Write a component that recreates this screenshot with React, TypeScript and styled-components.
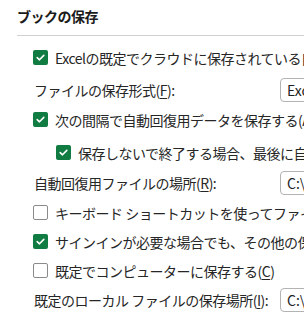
import React from "react";
import styled, { createGlobalStyle } from "styled-components";

const GlobalStyle = createGlobalStyle`
  html, body {
    margin: 0;
    padding: 0;
    background: #ffffff;
  }
  body {
    font-family: "Noto Sans CJK JP", sans-serif;
    color: #262626;
  }
`;

const Page = styled.div`
  width: 304px;
  height: 316px;
  overflow: hidden;
  background: #ffffff;
`;

const Title = styled.h2`
  margin: 0;
  padding: 5px 0 0 17px;
  height: 35px;
  box-sizing: border-box;
  font-size: 14px;
  line-height: 22px;
  font-weight: 700;
  letter-spacing: -0.5px;
  color: #1b1b1b;
  font-family: "Noto Sans CJK JP", sans-serif;
  white-space: nowrap;
`;

const Divider = styled.div`
  height: 1px;
  margin-left: 17px;
  background: #d1d1d1;
`;

const Options = styled.div`
  display: flex;
  flex-direction: column;
  padding: 7px 0 0 33px;
`;

const CheckRow = styled.label<{ $indent?: boolean; $top?: number }>`
  display: flex;
  align-items: center;
  gap: 7px;
  height: 29px;
  margin-top: ${(p) => p.$top ?? 0}px;
  padding-left: ${(p) => (p.$indent ? 23 : 0)}px;
  font-size: 14px;
  line-height: 18px;
  letter-spacing: -0.5px;
  white-space: nowrap;
  font-family: "Noto Sans CJK JP", sans-serif;
`;

const Box = styled.span<{ $checked?: boolean }>`
  flex: none;
  width: 15px;
  height: 15px;
  box-sizing: border-box;
  border-radius: 2px;
  display: flex;
  align-items: center;
  justify-content: center;
  background: ${(p) => (p.$checked ? "#107c41" : "#ffffff")};
  border: ${(p) => (p.$checked ? "none" : "1px solid #8a8a8a")};
`;

const FormRow = styled.div<{ $top?: number }>`
  display: grid;
  grid-template-columns: 246px 80px;
  align-items: center;
  height: 30px;
  margin-top: ${(p) => p.$top ?? 0}px;
  padding-left: 1px;
  font-size: 14px;
  line-height: 18px;
  letter-spacing: -0.5px;
  white-space: nowrap;
  font-family: "Noto Sans CJK JP", sans-serif;
`;

const Field = styled.div`
  height: 24px;
  box-sizing: border-box;
  border: 1px solid #b3b3b3;
  border-radius: 4px;
  padding-left: 6px;
  display: flex;
  align-items: center;
  font-family: "Noto Sans CJK JP", sans-serif;
  font-size: 14px;
  letter-spacing: 0;
  color: #1f1f1f;
  overflow: hidden;
`;

const Key = styled.span`
  text-decoration: underline;
  text-underline-offset: 2px;
`;

function Check({ checked }: { checked?: boolean }) {
  return (
    <Box $checked={checked}>
      {checked ? (
        <svg width="11" height="11" viewBox="0 0 11 11">
          <path
            d="M2.2 5.6 L4.5 7.8 L8.8 3.4"
            fill="none"
            stroke="#ffffff"
            strokeWidth="1.6"
            strokeLinecap="round"
            strokeLinejoin="round"
          />
        </svg>
      ) : null}
    </Box>
  );
}

export default function App() {
  return (
    <Page>
      <GlobalStyle />
      <Title>ブックの保存</Title>
      <Divider />
      <Options>
        <CheckRow>
          <Check checked />
          Excelの既定でクラウドに保存されている自動保存を有効にする
        </CheckRow>
        <FormRow $top={3}>
          <span>
            ファイルの保存形式(<Key>F</Key>):
          </span>
          <Field>Excel ブック (*.xlsx)</Field>
        </FormRow>
        <CheckRow>
          <Check checked />
          次の間隔で自動回復用データを保存する(A):
        </CheckRow>
        <CheckRow $indent $top={4}>
          <Check checked />
          保存しないで終了する場合、最後に自動回復されたバージョンを残す(U)
        </CheckRow>
        <FormRow $top={1}>
          <span>
            自動回復用ファイルの場所(<Key>R</Key>):
          </span>
          <Field>C:\Users\AppData\Roaming</Field>
        </FormRow>
        <CheckRow>
          <Check />
          キーボード ショートカットを使ってファイルを開いたり保存したりするときに Backstage を表示しない(O)
        </CheckRow>
        <CheckRow>
          <Check checked />
          サインインが必要な場合でも、その他の保存場所を表示する(S)
        </CheckRow>
        <CheckRow>
          <Check />
          <span>
            既定でコンピューターに保存する(<Key>C</Key>)
          </span>
        </CheckRow>
        <FormRow>
          <span>
            既定のローカル ファイルの保存場所(<Key>I</Key>):
          </span>
          <Field>C:\Users\Documents</Field>
        </FormRow>
      </Options>
    </Page>
  );
}
